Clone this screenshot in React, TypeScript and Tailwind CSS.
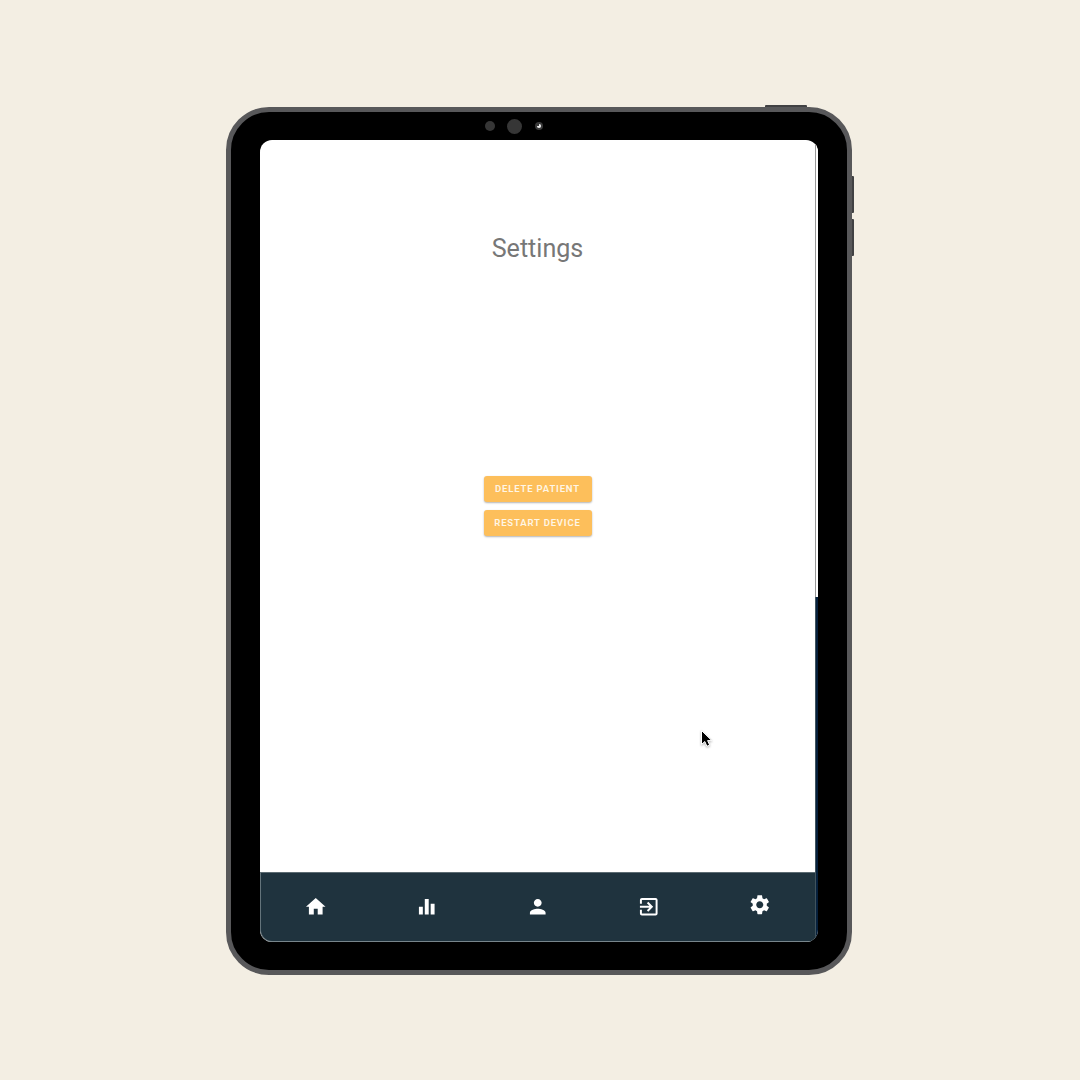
const icons = [
  { name: "Home", offset: "mr-[1px]", path: "M10 20v-6h4v6h5v-8h3L12 3 2 12h3v8z" },
  { name: "Statistics", offset: "", path: "M10 20h4V4h-4v16zm-6 0h4v-8H4v8zM16 9v11h4V9h-4z" },
  {
    name: "Patient",
    offset: "",
    path: "M12 12c2.21 0 4-1.79 4-4s-1.79-4-4-4-4 1.79-4 4 1.79 4 4 4zm0 2c-2.67 0-8 1.34-8 4v2h16v-2c0-2.66-5.33-4-8-4z",
  },
  {
    name: "Exit",
    offset: "",
    path: "M10.09 15.59L11.5 17l5-5-5-5-1.41 1.41L12.67 11H3v2h9.67l-2.58 2.59zM19 3H5c-1.11 0-2 .9-2 2v4h2V5h14v14H5v-4H3v4c0 1.1.89 2 2 2h14c1.1 0 2-.9 2-2V5c0-1.1-.9-2-2-2z",
  },
  {
    name: "Settings",
    offset: "mb-[4px]",
    path: "M19.14 12.94c.04-.3.06-.61.06-.94 0-.32-.02-.64-.07-.94l2.03-1.58c.18-.14.23-.41.12-.61l-1.92-3.32c-.12-.22-.37-.29-.59-.22l-2.39.96c-.5-.38-1.03-.7-1.62-.94l-.36-2.54c-.04-.24-.24-.41-.48-.41h-3.84c-.24 0-.43.17-.47.41l-.36 2.54c-.59.24-1.13.57-1.62.94l-2.39-.96c-.22-.08-.47 0-.59.22L2.74 8.87c-.12.21-.08.47.12.61l2.03 1.58c-.05.3-.09.63-.09.94s.02.64.07.94l-2.03 1.58c-.18.14-.23.41-.12.61l1.92 3.32c.12.22.37.29.59.22l2.39-.96c.5.38 1.03.7 1.62.94l.36 2.54c.05.24.24.41.48.41h3.84c.24 0 .44-.17.47-.41l.36-2.54c.59-.24 1.13-.56 1.62-.94l2.39.96c.22.08.47 0 .59-.22l1.92-3.32c.12-.22.07-.47-.12-.61l-2.01-1.58zM12 15.6c-1.98 0-3.6-1.62-3.6-3.6s1.62-3.6 3.6-3.6 3.6 1.62 3.6 3.6-1.62 3.6-3.6 3.6z",
  },
];

function ActionButton({ label }: { label: string }) {
  return (
    <button className="flex h-[26px] w-[108px] items-center justify-center rounded-[3px] bg-[#fdbf5b] text-[9.5px] font-semibold tracking-[0.84px] whitespace-nowrap text-[#fff6e6] shadow-[0_1px_2px_rgba(0,0,0,0.3)]">
      {label}
    </button>
  );
}

function Screen() {
  return (
    <div className="flex h-[802px] w-[558px] overflow-hidden rounded-[12px] bg-white">
      <main className="flex w-[555px] flex-col">
        <section className="flex flex-1 flex-col items-center">
          <h1 className="mt-[89px] text-[25.1px] leading-[40px] text-[#777777]">Settings</h1>
          <div className="mt-[207px] flex flex-col items-center gap-[8px]">
            <ActionButton label="DELETE PATIENT" />
            <ActionButton label="RESTART DEVICE" />
          </div>
        </section>
        <nav className="flex h-[70px] items-center rounded-bl-[12px] border-t border-b border-l border-t-[#5c6b72] border-b-[#77858b] border-l-[#64747b] bg-[#1f333e]">
          {icons.map((icon) => (
            <a key={icon.name} aria-label={icon.name} className="flex flex-1 justify-center">
              <svg viewBox="0 0 24 24" className={`size-[23.5px] fill-white ${icon.offset}`}>
                <path d={icon.path} />
              </svg>
            </a>
          ))}
        </nav>
      </main>
      <aside className="flex w-[3px] flex-col">
        <div className="h-[457px] border-l border-[#999999] bg-white" />
        <div className="flex-1 border-l border-[#40535d] bg-[#06203c]" />
      </aside>
    </div>
  );
}

export default function App() {
  return (
    <div className="flex h-[1080px] w-[1080px] bg-[#f3eee3] pt-[107px] pl-[226px] font-['Roboto',sans-serif]">
      <div className="relative h-[868px] w-[626px]">
        <div className="absolute -top-[2px] left-[539px] h-[3px] w-[42px] rounded-t-[1px] bg-[#414143]" />
        <div className="absolute top-[69px] -right-[2px] h-[37px] w-[3px] rounded-r-[1px] bg-[#414143]" />
        <div className="absolute top-[112px] -right-[2px] h-[37px] w-[3px] rounded-r-[1px] bg-[#414143]" />
        <div className="relative flex h-full w-full flex-col rounded-[43px] border-[5px] border-[#58585a] bg-black pl-[29px]">
          <div className="flex h-[28px] shrink-0 items-center pl-[225px]">
            <span className="size-[10px] rounded-full bg-[#363636]" />
            <span className="ml-[12px] size-[15px] rounded-full bg-[#363636]" />
            <svg viewBox="0 0 8 8" className="ml-[13px] size-[8px]">
              <circle cx="4" cy="4" r="4" fill="#3a3a3a" />
              <circle cx="4" cy="4" r="2.1" fill="#eeeeee" />
              <path d="M1.8 1.8H4V4H1.8z" fill="#3a3a3a" />
            </svg>
          </div>
          <Screen />
        </div>
      </div>
      <svg viewBox="0 0 14 22" className="absolute top-[729px] left-[700px] h-[22px] w-[14px] drop-shadow-[0_1px_1px_rgba(0,0,0,0.3)]">
        <path
          d="M1.5 1.5V15.5l3.3-3 2.1 4.8 2.8-1.2-2.1-4.5h4.2z"
          fill="#000000"
          stroke="#ffffff"
          strokeWidth="1"
        />
      </svg>
    </div>
  );
}
